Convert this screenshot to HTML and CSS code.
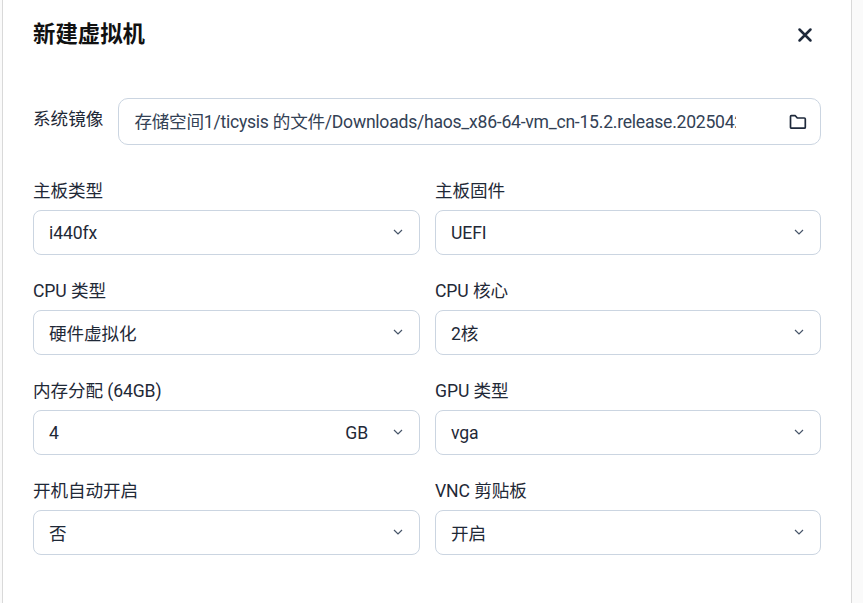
FILE: index.html
```html
<!DOCTYPE html>
<html lang="zh-CN">
<head>
<meta charset="utf-8">
<title>新建虚拟机</title>
<link rel="stylesheet" href="styles.css">
</head>
<body>
<div class="modal">
  <header class="head">
    <h2 class="title">新建虚拟机</h2>
    <button class="close" aria-label="关闭">
      <svg width="24" height="24" viewBox="0 0 24 24" fill="none" stroke="#1e293b" stroke-width="2.5" stroke-linecap="round" stroke-linejoin="round"><path d="M6.500 6.500l11 11M17.500 6.500l-11 11"/></svg>
    </button>
  </header>
  <div class="image-row">
    <label class="image-label">系统镜像</label>
    <div class="field image-field">
      <span class="image-path">存储空间1/ticysis 的文件/Downloads/haos_x86-64-vm_cn-15.2.release.20250422</span>
      <svg class="folder" width="20" height="20" viewBox="0 0 20 20" fill="none" stroke="#1e293b" stroke-width="1.7" stroke-linejoin="round"><path d="M2.500 4.500a.8.8 0 0 1 .8-.8h4l2 2.300h7a1 1 0 0 1 1 1v8.200a1 1 0 0 1-1 1H3.500a1 1 0 0 1-1-1z"/></svg>
    </div>
  </div>
  <div class="grid">
    <div class="item"><label class="label">主板类型</label><div class="field"><span class="value">i440fx</span><svg class="chev" viewBox="0 0 10 6"><path d="M1 1l4 4 4-4"/></svg></div></div>
    <div class="item"><label class="label">主板固件</label><div class="field"><span class="value">UEFI</span><svg class="chev" viewBox="0 0 10 6"><path d="M1 1l4 4 4-4"/></svg></div></div>
    <div class="item"><label class="label">CPU 类型</label><div class="field"><span class="value">硬件虚拟化</span><svg class="chev" viewBox="0 0 10 6"><path d="M1 1l4 4 4-4"/></svg></div></div>
    <div class="item"><label class="label">CPU 核心</label><div class="field"><span class="value">2核</span><svg class="chev" viewBox="0 0 10 6"><path d="M1 1l4 4 4-4"/></svg></div></div>
    <div class="item"><label class="label">内存分配 (64GB)</label><div class="field"><span class="value">4</span><span class="unit">GB</span><svg class="chev" viewBox="0 0 10 6"><path d="M1 1l4 4 4-4"/></svg></div></div>
    <div class="item"><label class="label">GPU 类型</label><div class="field"><span class="value">vga</span><svg class="chev" viewBox="0 0 10 6"><path d="M1 1l4 4 4-4"/></svg></div></div>
    <div class="item"><label class="label">开机自动开启</label><div class="field"><span class="value">否</span><svg class="chev" viewBox="0 0 10 6"><path d="M1 1l4 4 4-4"/></svg></div></div>
    <div class="item"><label class="label">VNC 剪贴板</label><div class="field"><span class="value">开启</span><svg class="chev" viewBox="0 0 10 6"><path d="M1 1l4 4 4-4"/></svg></div></div>
  </div>
</div>
</body>
</html>
```
FILE: styles.css
```css
* { box-sizing: border-box; }
html, body { margin: 0; height: 100%; overflow: hidden; }
body {
  background: #fafafa;
  font-family: Roboto, "Noto Sans CJK SC", sans-serif;
  font-size: 17.6px;
  color: #1f2937;
  padding-left: 2px;
}
.modal {
  width: 850px;
  height: 603px;
  background: #fff;
  border-left: 1px solid #d9d9d9;
  border-right: 1px solid #d9d9d9;
  padding: 0 30px 0 30px;
}
.head {
  height: 98px;
  display: flex;
  justify-content: space-between;
  align-items: flex-start;
  padding-top: 20px;
}
.title {
  margin: 0;
  font-size: 22.4px;
  line-height: 28px;
  font-weight: 700;
  color: #111;
}
.close {
  width: 24px;
  height: 24px;
  padding: 0;
  margin: 3px 4px 0 0;
  border: 0;
  background: none;
  display: flex;
}
.image-row {
  display: flex;
  gap: 15px;
  align-items: flex-start;
}
.image-label {
  line-height: 24px;
  padding-top: 9px;
  white-space: nowrap;
  flex: none;
}
.label {
  display: block;
  height: 22px;
  line-height: 22px;
  margin-bottom: 8px;
  white-space: nowrap;
  letter-spacing: -0.1px;
}
.field {
  height: 45px;
  border: 1px solid #cbd5e1;
  border-radius: 8px;
  display: flex;
  align-items: center;
  padding: 0 15px;
  background: #fff;
}
.image-field {
  flex: 1;
  min-width: 0;
  height: 47px;
  border-radius: 10px;
  padding-right: 12px;
}
.image-path {
  flex: 1;
  min-width: 0;
  overflow: hidden;
  white-space: nowrap;
  color: #334155;
  margin-right: 52px;
  padding-bottom: 3px;
  letter-spacing: -0.25px;
}
.folder { flex: none; }
.grid {
  display: grid;
  grid-template-columns: 387px 386px;
  column-gap: 15px;
  row-gap: 25px;
  margin-top: 35px;
}
.value { flex: 1; color: #1f2937; letter-spacing: -0.1px; }
.unit { margin-right: 25px; color: #1f2937; letter-spacing: -0.1px; }
.chev {
  width: 10px;
  height: 6px;
  flex: none;
  margin-right: 1px;
  margin-top: -2px;
  fill: none;
  stroke: #475569;
  stroke-width: 1.2;
}
```
